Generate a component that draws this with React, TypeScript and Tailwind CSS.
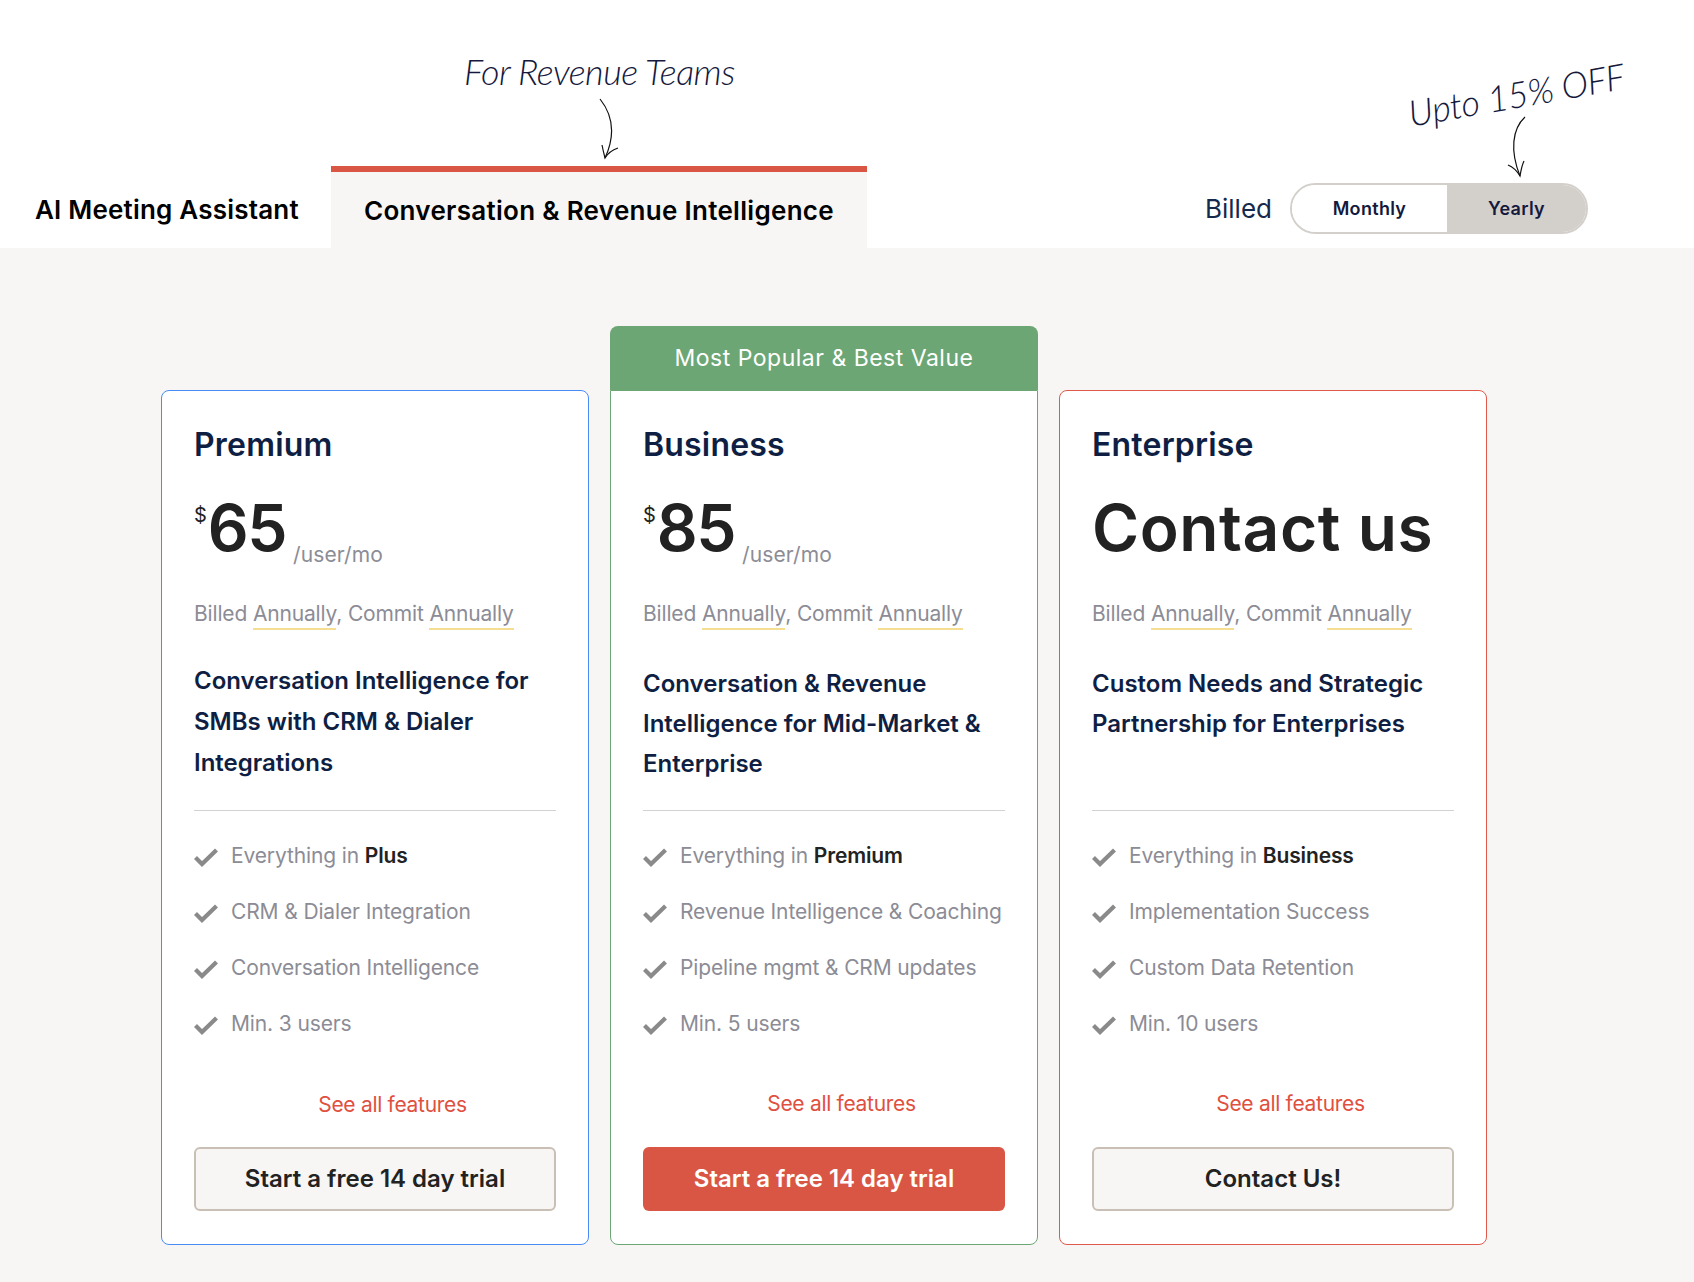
import React from "react";

interface Plan {
	name: string;
	price?: string;
	subtitle: string[];
	subtitleClass: string;
	base: string;
	features: string[];
	cta: string;
	borderClass: string;
	primary?: boolean;
	seeClass: string;
	badge?: string;
}

const plans: Plan[] = [
	{
		name: "Premium",
		price: "65",
		subtitle: ["Conversation Intelligence for", "SMBs with CRM & Dialer", "Integrations"],
		subtitleClass: "pt-[29px] leading-[41px]",
		base: "Plus",
		features: ["CRM & Dialer Integration", "Conversation Intelligence", "Min. 3 users"],
		cta: "Start a free 14 day trial",
		borderClass: "border-[#4a8bf5] rounded-lg",
		seeClass: "pt-[1px]",
	},
	{
		name: "Business",
		price: "85",
		subtitle: ["Conversation & Revenue", "Intelligence for Mid-Market &", "Enterprise"],
		subtitleClass: "pt-[33px] leading-[40px]",
		base: "Premium",
		features: ["Revenue Intelligence & Coaching", "Pipeline mgmt & CRM updates", "Min. 5 users"],
		cta: "Start a free 14 day trial",
		borderClass: "border-[#6ca674] rounded-b-lg",
		primary: true,
		seeClass: "",
		badge: "Most Popular & Best Value",
	},
	{
		name: "Enterprise",
		subtitle: ["Custom Needs and Strategic", "Partnership for Enterprises"],
		subtitleClass: "pt-[33px] leading-[40px]",
		base: "Business",
		features: ["Implementation Success", "Custom Data Retention", "Min. 10 users"],
		cta: "Contact Us!",
		borderClass: "border-[#e0594a] rounded-lg",
		seeClass: "",
	},
];

function Check() {
	return (
		<svg width="24" height="20" viewBox="0 0 24 20" className="shrink-0 mt-[1px]">
			<path d="M1.5 10.5 L8 17 L22.5 3" fill="none" stroke="#8a8a8a" strokeWidth="4.2" />
		</svg>
	);
}

function PlanCard({ plan }: { plan: Plan }) {
	return (
		<div className="flex flex-col">
			{plan.badge && (
				<div className="h-[64px] bg-[#6ca674] rounded-t-lg flex items-center justify-center text-white text-[23px] tracking-[0.5px]">
					{plan.badge}
				</div>
			)}
			<div className={`h-[855px] bg-white border px-[32px] flex flex-col ${plan.borderClass}`}>
				<h3 className="mt-[30px] h-[48px] flex items-center text-[32px] font-semibold text-[#0f1f44] tracking-[0.2px]">
					{plan.name}
				</h3>
				<div className="h-[88px] mt-[15px] flex items-center">
					{plan.price ? (
						<div className="relative flex items-baseline text-[#222]">
							<span className="self-start text-[20px] mt-[10px] mr-[1px]">$</span>
							<span className="text-[64px] font-semibold leading-[76px] tracking-[-1.5px]">{plan.price}</span>
							<span className="ml-[7px] text-[21px] text-[#8c8c96] translate-y-[11px] tracking-[0.1px]">/user/mo</span>
						</div>
					) : (
						<span className="text-[64px] font-semibold leading-[76px] text-[#222] tracking-[0.6px]">Contact us</span>
					)}
				</div>
				<p className="mt-[25px] h-[34px] text-[21px] leading-[34px] text-[#8c8c96] tracking-[-0.16px]">
					Billed <span className="border-b-2 pb-[2px] border-[#f5dd92]">Annually</span>, Commit{" "}
					<span className="border-b-2 pb-[2px] border-[#f5dd92]">Annually</span>
				</p>
				<div className={`h-[179px] text-[24px] font-semibold text-[#0f1f44] ${plan.subtitleClass}`}>
					{plan.subtitle.map((line) => (
						<div key={line}>{line}</div>
					))}
				</div>
				<div className="border-t border-[#d4d2d0]" />
				<ul className="mt-[17px] flex flex-col">
					<li className="h-[56px] flex items-center gap-[13px] text-[21px] text-[#8c8c96] tracking-[-0.13px]">
						<Check />
						<span>
							Everything in <b className="font-semibold text-[#222]">{plan.base}</b>
						</span>
					</li>
					{plan.features.map((feature) => (
						<li key={feature} className="h-[56px] flex items-center gap-[13px] text-[21px] text-[#8c8c96] tracking-[-0.13px] whitespace-nowrap">
							<Check />
							<span>{feature}</span>
						</li>
					))}
				</ul>
				<div className={`mt-[24px] h-[56px] flex items-center justify-center pl-[35px] text-[21px] text-[#e0503f] tracking-[-0.3px] ${plan.seeClass}`}>
					See all features
				</div>
				<button
					className={`mt-[15px] h-[64px] rounded-md text-[24px] font-semibold ${
						plan.primary ? "bg-[#d95645] text-white" : "bg-[#f7f6f4] border-2 border-[#c9bfb5] text-[#222]"
					}`}
				>
					{plan.cta}
				</button>
			</div>
		</div>
	);
}

export default function App() {
	return (
		<div className="min-h-[1282px] bg-[#f7f6f4] font-['Inter',sans-serif]">
			<header className="h-[248px] bg-white flex items-end">
				<div className="w-[331px] h-[82px] pl-[35px] pt-[5px] flex items-center text-[26px] font-semibold text-black tracking-[0.2px]">
					AI Meeting Assistant
				</div>
				<div className="relative w-[536px] h-[82px] bg-[#f7f6f4] border-t-[6px] border-[#d95645] flex items-center justify-center text-[26px] font-semibold text-black tracking-[0.3px]">
					Conversation &amp; Revenue Intelligence
					<span className="absolute left-[133px] top-[-128px] font-['Lato',sans-serif] italic font-light text-[36px] text-[#14193d] tracking-[-0.5px] whitespace-nowrap">
						For Revenue Teams
					</span>
					<svg width="24" height="66" viewBox="0 0 24 66" className="absolute left-[265px] top-[-76px]" fill="none" stroke="#111" strokeWidth="1.2">
						<path d="M4 3 C16 18 20 38 9 62" />
						<path d="M6 49 C7 54 8 58 9 62 C12 57 16 54 22 52" />
					</svg>
				</div>
				<div className="relative ml-auto mr-[106px] mb-[14px] flex items-center">
					<span className="text-[26px] text-[#14294d] mr-[18px]">Billed</span>
					<div className="w-[298px] h-[51px] flex rounded-full border-2 border-[#d3cfcb] overflow-hidden text-[18px] font-semibold text-[#14193d] tracking-[0.3px]">
						<div className="w-[155px] flex items-center justify-center bg-white">Monthly</div>
						<div className="flex-1 flex items-center justify-center bg-[#d3cfcb]">Yearly</div>
					</div>
					<span className="absolute right-[-37px] top-[-116px] -rotate-[10deg] font-['Lato',sans-serif] italic font-light text-[36px] text-[#14193d] tracking-[-0.4px] whitespace-nowrap">
						Upto 15% OFF
					</span>
					<svg width="24" height="64" viewBox="0 0 24 64" className="absolute right-[60px] top-[-68px]" fill="none" stroke="#111" strokeWidth="1.2">
						<path d="M21 2 C8 14 6 36 16 61" />
						<path d="M4 50 C9 52 13 56 16 61 C17 55 18 50 20 46" />
					</svg>
				</div>
			</header>
			<main className="pt-[78px] pl-[161px] pr-[207px]">
				<div className="grid grid-cols-3 gap-[21px] items-end">
					{plans.map((plan) => (
						<PlanCard key={plan.name} plan={plan} />
					))}
				</div>
			</main>
		</div>
	);
}
